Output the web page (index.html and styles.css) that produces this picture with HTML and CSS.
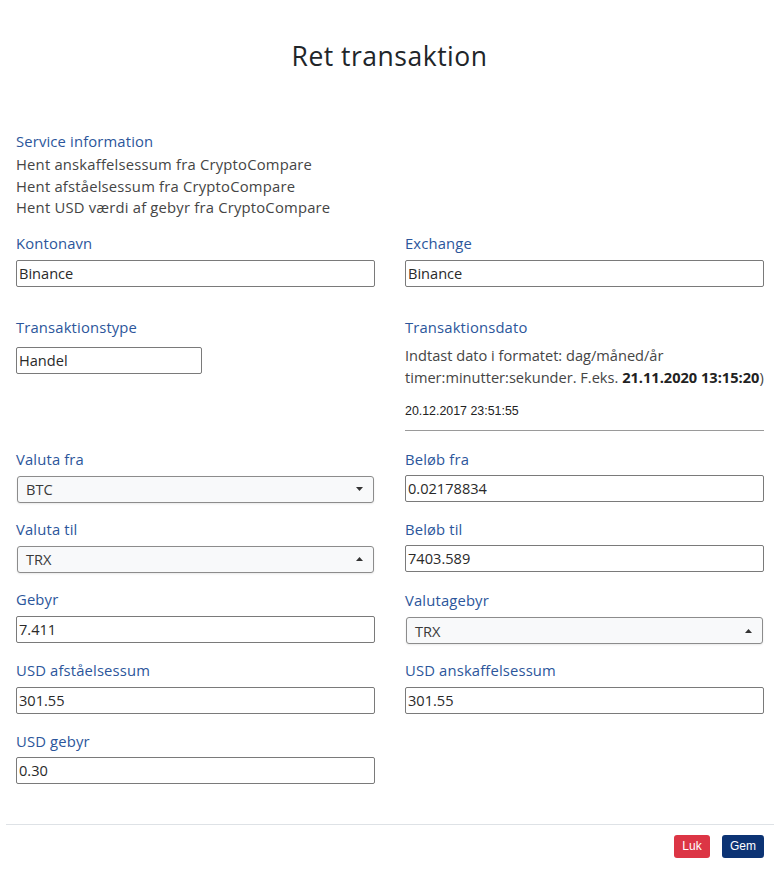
FILE: index.html
```html
<!DOCTYPE html>
<html lang="da">
<head>
<meta charset="utf-8">
<title>Ret transaktion</title>
<link rel="stylesheet" href="styles.css">
</head>
<body>
<div class="modal">
  <div class="modal-header">
    <h1 class="modal-title">Ret transaktion</h1>
  </div>
  <div class="modal-body">
    <section class="service">
      <div class="label">Service information</div>
      <div class="service-line">Hent anskaffelsessum fra CryptoCompare</div>
      <div class="service-line">Hent afståelsessum fra CryptoCompare</div>
      <div class="service-line">Hent USD værdi af gebyr fra CryptoCompare</div>
    </section>

    <div class="form-grid">
      <div class="field field-first">
        <div class="label">Kontonavn</div>
        <div class="input">Binance</div>
      </div>
      <div class="field field-first">
        <div class="label">Exchange</div>
        <div class="input">Binance</div>
      </div>

      <div class="field">
        <div class="label">Transaktionstype</div>
        <div class="input input-short input-gap">Handel</div>
      </div>
      <div class="field field-date">
        <div class="label">Transaktionsdato</div>
        <div class="date-help">Indtast dato i formatet: dag/måned/år<br><span class="nowrap">timer:minutter:sekunder. F.eks. <b>21.11.2020 13:15:20</b>)</span></div>
        <div class="date-value">20.12.2017 23:51:55</div>
        <div class="date-rule"></div>
      </div>

      <div class="field">
        <div class="label">Valuta fra</div>
        <div class="select"><span>BTC</span><svg class="caret" width="7" height="4" viewBox="0 0 7 4"><path d="M0 0h7L3.5 4z" fill="#333"/></svg></div>
      </div>
      <div class="field">
        <div class="label">Beløb fra</div>
        <div class="input input-tight">0.02178834</div>
      </div>

      <div class="field">
        <div class="label">Valuta til</div>
        <div class="select"><span>TRX</span><svg class="caret" width="7" height="4" viewBox="0 0 7 4"><path d="M0 4h7L3.5 0z" fill="#333"/></svg></div>
      </div>
      <div class="field">
        <div class="label">Beløb til</div>
        <div class="input input-tight">7403.589</div>
      </div>

      <div class="field">
        <div class="label">Gebyr</div>
        <div class="input">7.411</div>
      </div>
      <div class="field field-offset">
        <div class="label">Valutagebyr</div>
        <div class="select"><span>TRX</span><svg class="caret" width="7" height="4" viewBox="0 0 7 4"><path d="M0 4h7L3.5 0z" fill="#333"/></svg></div>
      </div>

      <div class="field">
        <div class="label">USD afståelsessum</div>
        <div class="input">301.55</div>
      </div>
      <div class="field">
        <div class="label">USD anskaffelsessum</div>
        <div class="input">301.55</div>
      </div>

      <div class="field field-last">
        <div class="label">USD gebyr</div>
        <div class="input input-tight">0.30</div>
      </div>
    </div>
  </div>
  <div class="modal-footer">
    <button class="btn btn-danger" type="button">Luk</button>
    <button class="btn btn-primary" type="button">Gem</button>
  </div>
</div>
</body>
</html>
```

FILE: styles.css
```css
* {
  box-sizing: border-box;
}

body {
  margin: 0;
  background: #ffffff;
  font-family: "Open Sans", "DejaVu Sans", sans-serif;
  font-size: 15px;
  color: #444444;
}

.modal {
  width: 783px;
  min-height: 877px;
  background: #ffffff;
}

.modal-header {
  padding-top: 40px;
  text-align: center;
}

.modal-title {
  margin: 0;
  font-size: 26.5px;
  line-height: 32px;
  font-weight: 400;
  color: #212529;
  letter-spacing: 0.5px;
  padding-right: 4px;
}

.modal-body {
  padding: 59px 19px 0 16px;
}

.label {
  color: #2c569b;
  font-size: 14.8px;
  line-height: 20px;
  letter-spacing: 0.15px;
}

.service .label {
  margin-bottom: 3px;
}

.service-line {
  font-size: 14.8px;
  line-height: 21.5px;
  color: #454545;
  letter-spacing: 0.2px;
}

.form-grid {
  margin-top: 14px;
  display: grid;
  grid-template-columns: 359px 359px;
  column-gap: 30px;
  align-items: start;
}

.field {
  margin-bottom: 16.3px;
}

.field .label {
  margin-bottom: 7px;
}

.field-first {
  margin-bottom: 30px;
}

.field-offset {
  margin-top: 1px;
}

.input {
  height: 27px;
  border: 1px solid #7a7a7a;
  border-radius: 2px;
  padding: 0 2px;
  font-size: 14.6px;
  line-height: 25px;
  color: #2a2a2a;
  white-space: nowrap;
}

.input-tight {
  margin-top: -1px;
}

.input-short {
  width: 186px;
}

.input-gap {
  margin-top: 10px;
}

.select {
  height: 27px;
  margin: 0 1px;
  border: 1px solid #8c8c8c;
  border-radius: 3px;
  background: #f8f9fa;
  box-shadow: 0 1px 2px rgba(0, 0, 0, 0.09);
  padding: 0 10px 0 8px;
  display: flex;
  align-items: center;
  justify-content: space-between;
  font-size: 14.6px;
  color: #3a3a3a;
}

.caret {
  display: block;
}

.field-date {
  margin-bottom: 18px;
}

.date-help {
  font-size: 14.6px;
  line-height: 22px;
  color: #454545;
  margin-top: 1px;
}

.date-help b {
  font-weight: 700;
  color: #222222;
}

.nowrap {
  white-space: nowrap;
}

.date-value {
  margin-top: 16px;
  font-family: "Liberation Sans", Arial, sans-serif;
  font-size: 12.4px;
  line-height: 15px;
  color: #222222;
}

.date-rule {
  margin-top: 11px;
  height: 1px;
  background: #9a9a9a;
}

.field-last {
  margin-bottom: 0;
}

.modal-footer {
  margin: 40px 9px 0 6px;
  border-top: 1px solid #dee2e6;
  padding: 10px 10px 10px 0;
  display: flex;
  justify-content: flex-end;
  gap: 12px;
}

.btn {
  height: 23px;
  border: none;
  border-radius: 3px;
  padding: 0 8px;
  font-family: "Liberation Sans", Arial, sans-serif;
  font-size: 12px;
  color: #ffffff;
  cursor: pointer;
}

.btn-danger {
  background: #dc3545;
  width: 36px;
}

.btn-primary {
  background: #0c3374;
  width: 42px;
}
```
